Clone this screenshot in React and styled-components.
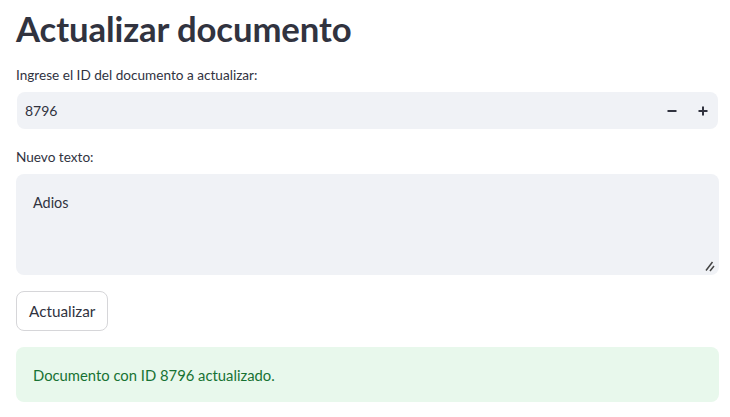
import React from 'react';
import styled, { createGlobalStyle } from 'styled-components';

const Global = createGlobalStyle`
  body {
    margin: 0;
    background: #ffffff;
    font-family: "Source Sans Pro", Lato, "Noto Sans", sans-serif;
    color: #31333f;
  }
`

const Page = styled.main`
  padding: 0 11px 0 16px;
  display: flex;
  flex-direction: column;
`
const Title = styled.h1`
  margin: 0;
  padding: 4px 0 0;
  font-size: 34.7px;
  font-weight: 700;
  line-height: 50px;
  color: #31333f;
  letter-spacing: -0.1px;
`
const Field = styled.div`
  display: flex;
  flex-direction: column;
  margin-top: ${p => p.top}px;
`
const Label = styled.label`
  font-size: 13.6px;
  line-height: 18px;
  margin-bottom: 8px;
  color: #31333f;
`
const NumberBox = styled.div`
  display: flex;
  align-items: center;
  height: 37px;
  background: #f0f2f6;
  border-radius: 8px;
  margin-left: 1px;
  margin-right: 1px;
`
const NumberValue = styled.span`
  flex: 1;
  padding-left: 8px;
  font-size: 14px;
`
const StepButton = styled.span`
  width: 31px;
  height: 37px;
  display: flex;
  align-items: center;
  justify-content: center;
`
const TextArea = styled.div`
  position: relative;
  height: 101px;
  background: #f0f2f6;
  border-radius: 8px;
  padding: 20px 17px;
  box-sizing: border-box;
  font-size: 14.4px;
`
const Grip = styled.svg`
  position: absolute;
  right: 4px;
  bottom: 3px;
`
const Button = styled.button`
  align-self: flex-start;
  margin-top: 16px;
  height: 40px;
  padding: 0 12px;
  background: #fff;
  border: 1px solid #d6d6d9;
  border-radius: 8px;
  font-family: inherit;
  font-size: 15.3px;
  color: #31333f;
`
const Alert = styled.div`
  margin-top: 16px;
  height: 55px;
  display: flex;
  align-items: center;
  padding: 0 17px;
  background: #e8f8ec;
  border-radius: 8px;
  color: #177233;
  font-size: 14.8px;
`

const Minus = () => (
  <svg width="10" height="10" viewBox="0 0 10 10">
    <rect x="0.5" y="4" width="9" height="2" fill="#31333f" />
  </svg>
)
const Plus = () => (
  <svg width="10" height="10" viewBox="0 0 10 10">
    <rect x="0.5" y="4" width="9" height="2" fill="#31333f" />
    <rect x="4" y="0.5" width="2" height="9" fill="#31333f" />
  </svg>
)

export default function App() {
  return (
    <Page>
      <Global />
      <Title>Actualizar documento</Title>
      <Field top={12}>
        <Label>Ingrese el ID del documento a actualizar:</Label>
        <NumberBox>
          <NumberValue>8796</NumberValue>
          <StepButton><Minus /></StepButton>
          <StepButton><Plus /></StepButton>
        </NumberBox>
      </Field>
      <Field top={19}>
        <Label>Nuevo texto:</Label>
        <TextArea>
          Adios
          <Grip width="10" height="11" viewBox="0 0 10 11">
            <path d="M7.5 1 L1 9.5 M9 5 L5 10" stroke="#444" strokeWidth="1.5" />
          </Grip>
        </TextArea>
      </Field>
      <Button>Actualizar</Button>
      <Alert>Documento con ID 8796 actualizado.</Alert>
    </Page>
  );
}
